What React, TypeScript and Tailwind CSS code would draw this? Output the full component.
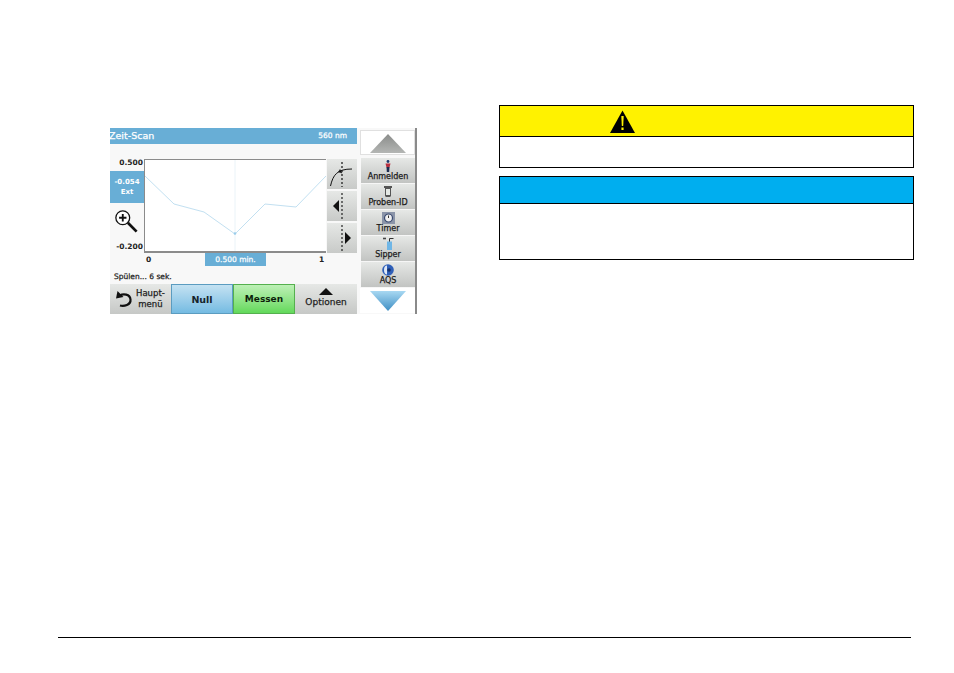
const font = "[font-family:'DejaVu_Sans',sans-serif]";

function SideButton({ label, icon }: { label: string; icon: React.ReactNode }) {
  return (
    <div className="h-[26px] w-[54px] ml-px flex flex-col items-center justify-between pb-px bg-gradient-to-b from-[#e6e8e6] to-[#c2c4c2] border-b border-[#f6f6f6] text-[8px] leading-[10px] text-[#1a1a1a] [-webkit-text-stroke:0.25px_#1a1a1a]">
      <div className="h-[14px] pt-px flex items-center justify-center">{icon}</div>
      <span>{label}</span>
    </div>
  );
}

function ToolButton({ children }: { children: React.ReactNode }) {
  return (
    <div className="h-[30px] w-[30px] flex items-center justify-center bg-gradient-to-b from-[#e6e8e6] to-[#c8cac8]">
      {children}
    </div>
  );
}

function Instrument() {
  return (
    <div className={`w-[307px] h-[186px] flex gap-[3px] bg-[#f8f8f8] ${font}`}>
      {/* Main screen */}
      <div className="w-[247px] flex flex-col">
        <div className="h-[16px] bg-[#68aed6] flex items-center justify-between pr-[10px] text-white [-webkit-text-stroke:0.25px_#fff]">
          <span className="text-[9.5px] -ml-px">Zeit-Scan</span>
          <span className="text-[7.5px]">560 nm</span>
        </div>

        <div className="flex mt-[15px] h-[94px]">
          <div className="w-[34px] flex flex-col items-end shrink-0">
            <span className="text-[7.5px] font-bold leading-[10px] -mt-[1px] pr-px text-[#222]">0.500</span>
            <div className="w-full h-[32px] mt-[3px] bg-[#68aed6] text-white text-[7px] font-bold leading-[10px] flex flex-col items-center justify-center">
              <span>-0.054</span>
              <span>Ext</span>
            </div>
            <svg viewBox="0 0 26 26" className="w-[24px] h-[24px] mt-[6px] mr-[6px]" fill="none" stroke="#111">
              <circle cx="9.5" cy="9.5" r="7.5" strokeWidth="1.4" fill="#fff" />
              <path d="M5.5 9.5h8M9.5 5.5v8" strokeWidth="2" />
              <path d="M15 15l9.5 9.5" strokeWidth="3" />
            </svg>
            <span className="text-[7.5px] font-bold leading-[10px] mt-auto mb-px pr-px text-[#222]">-0.200</span>
          </div>

          <div className="w-[182px] border-l border-t border-b-2 border-[#8b8b8b] bg-white shrink-0">
            <svg viewBox="0 0 181 91" className="w-full h-full" fill="none">
              <path d="M90 0V91" stroke="#eaf3f8" />
              <path d="M0 16L29 44L59 52L90 74L120 44L151 47L181 16" stroke="#c2e0f1" />
              <circle cx="90" cy="73.5" r="1.3" fill="#9accea" />
            </svg>
          </div>

          <div className="flex flex-col justify-between pl-px w-[31px]">
            <ToolButton>
              <svg viewBox="0 0 26 28" className="w-[26px] h-[28px]" fill="none" stroke="#111">
                <path d="M13 2V27" strokeWidth="1.2" strokeDasharray="2 2" />
                <path d="M1.5 26C4 15 8 9 23 9" strokeWidth="1" />
                <path d="M9.5 12l3.5 1-2-3.5z" fill="#111" strokeWidth="0.5" />
              </svg>
            </ToolButton>
            <ToolButton>
              <svg viewBox="0 0 26 28" className="w-[26px] h-[28px]" fill="none">
                <path d="M13 1V27" stroke="#222" strokeWidth="1.2" strokeDasharray="2 2" />
                <path d="M10 8V20L4 14z" fill="#111" />
              </svg>
            </ToolButton>
            <ToolButton>
              <svg viewBox="0 0 26 28" className="w-[26px] h-[28px]" fill="none">
                <path d="M13 1V27" stroke="#222" strokeWidth="1.2" strokeDasharray="2 2" />
                <path d="M16 8V20L22 14z" fill="#111" />
              </svg>
            </ToolButton>
          </div>
        </div>

        <div className="flex h-[13px] text-[7.5px] font-bold text-[#222] leading-[13px]">
          <span className="ml-[36px] w-[59px]">0</span>
          <div className="w-[61px] bg-[#68aed6] text-white text-center text-[7.5px] font-normal [-webkit-text-stroke:0.25px_#fff]">0.500 min.</div>
          <span className="ml-[53px]">1</span>
        </div>

        <div className="h-[18px] pl-[4px] pt-[5px] text-[7.5px] leading-[12px] text-[#222] [-webkit-text-stroke:0.25px_#222]">Spülen... 6 sek.</div>

        <div className="flex h-[30px] text-[9.5px] mt-auto">
          <div className="w-[61px] flex items-center gap-[3px] pl-[5px] bg-gradient-to-b from-[#e6e8e6] to-[#c6c8c6] text-[8.5px] leading-[11px] text-[#222]">
            <svg viewBox="0 0 18 18" className="w-[18px] h-[18px] shrink-0" fill="none" stroke="#111">
              <path d="M5 5.5C8 3.5 15 4 15.5 9.5C16 15 9 16.5 5 15.5" strokeWidth="2.2" />
              <path d="M1 8.5L2.5 1L8.5 7z" fill="#111" stroke="none" />
            </svg>
            <div className="text-center [-webkit-text-stroke:0.25px_#222]">Haupt-<br />menü</div>
          </div>
          <div className="w-[62px] pt-[2px] flex items-center justify-center bg-gradient-to-b from-[#c4e2f2] to-[#74bbe2] border border-[#5b9cc0] font-bold text-[#15232b]">Null</div>
          <div className="w-[62px] pt-[2px] flex items-center justify-center bg-gradient-to-b from-[#bdf0b6] to-[#62d95a] border border-[#55b04e] font-bold text-[#0d1f0b] text-[9px]">Messen</div>
          <div className="w-[62px] pb-[2px] flex flex-col items-center justify-center bg-gradient-to-b from-[#e6e8e6] to-[#c6c8c6] text-[9px] leading-[11px] text-[#222]">
            <svg viewBox="0 0 14 7" className="w-[14px] h-[7px] mb-[2px]"><path d="M7 0l7 7H0z" fill="#111" /></svg>
            <span className="[-webkit-text-stroke:0.25px_#222]">Optionen</span>
          </div>
        </div>
      </div>

      {/* Side menu */}
      <div className="w-[57px] border-r-2 border-[#8a8a8a] pt-[2px] flex flex-col">
        <div className="h-[25px] w-[55px] flex items-center justify-center bg-white border border-[#e0e0e0]">
          <svg viewBox="0 0 36 19" className="w-[36px] h-[19px] mt-[2px]">
            <defs>
              <linearGradient id="up" x1="0" y1="0" x2="0" y2="1">
                <stop offset="0" stopColor="#8a8c8a" />
                <stop offset="1" stopColor="#b4b6b4" />
              </linearGradient>
            </defs>
            <path d="M18 0l18 19H0z" fill="url(#up)" />
          </svg>
        </div>
        <div className="h-[3px]" />
        <SideButton
          label="Anmelden"
          icon={
            <svg viewBox="0 0 6 12" className="w-[6px] h-[12px]">
              <circle cx="3" cy="1.5" r="1.4" fill="#1c3c70" />
              <path d="M0.5 3.5h5l-1 4h-3z" fill="#b83040" />
              <path d="M1.5 7h3l-.3 5H1.8z" fill="#1c2c50" />
            </svg>
          }
        />
        <SideButton
          label="Proben-ID"
          icon={
            <svg viewBox="0 0 8 11" className="w-[8px] h-[11px]">
              <path d="M0 0h8v2H7v8l-1 1H2l-1-1V2H0z" fill="#555" />
              <path d="M2 3h4v6H2z" fill="#e4e8e4" />
            </svg>
          }
        />
        <SideButton
          label="Timer"
          icon={
            <svg viewBox="0 0 13 12" className="w-[13px] h-[12px]">
              <rect x="0" y="0" width="13" height="12" fill="#8a94a8" />
              <circle cx="6.5" cy="6" r="4" fill="#f0f0f0" stroke="#3a4a70" strokeWidth="1.2" />
              <path d="M6.5 3.5V6" stroke="#333" fill="none" />
            </svg>
          }
        />
        <SideButton
          label="Sipper"
          icon={
            <svg viewBox="0 0 13 13" className="w-[13px] h-[13px]" fill="none">
              <path d="M1 1.5h3" stroke="#444" strokeWidth="1.6" />
              <path d="M7.5 5V1.5h4" stroke="#333" strokeWidth="1" />
              <path d="M5 4.5h5V13H5z" fill="#6fb6e6" />
            </svg>
          }
        />
        <SideButton
          label="AQS"
          icon={
            <svg viewBox="0 0 12 12" className="w-[12px] h-[12px]">
              <circle cx="6" cy="6" r="5.8" fill="#2f5fb8" />
              <path d="M5 1.5a3 4.5 0 0 0 0 9z" fill="#dfe8f6" />
              <circle cx="7" cy="6" r="1.8" fill="#16306a" />
            </svg>
          }
        />
        <div className="h-[25px] w-[55px] flex items-center justify-center bg-white">
          <svg viewBox="0 0 36 20" className="w-[36px] h-[20px]">
            <defs>
              <linearGradient id="down" x1="0" y1="0" x2="0" y2="1">
                <stop offset="0" stopColor="#a8d8f2" />
                <stop offset="1" stopColor="#3f8fc4" />
              </linearGradient>
            </defs>
            <path d="M0 0h36L18 20z" fill="url(#down)" />
          </svg>
        </div>
      </div>
    </div>
  );
}

export default function App() {
  return (
    <div className="w-[954px] h-[673px] bg-white flex flex-col">
      <div className="flex h-[637px]">
        <div className="w-[499px] pl-[110px] pt-[128px]">
          <Instrument />
        </div>

        <div className="w-[415px] pt-[105px] flex flex-col">
          {/* Warning box */}
          <div className="h-[63px] border border-black flex flex-col">
            <div className="h-[30px] bg-[#fff200] border-b border-black box-content flex items-center pl-[110px]">
              <svg viewBox="0 0 25 23" className="w-[25px] h-[23px]">
                <path d="M12.5 0.5L25 23H0z" fill="#000" />
                <path d="M11.3 6h2.4l-.5 10h-1.4z" fill="#fff200" />
                <rect x="11.4" y="17.5" width="2.2" height="2.5" fill="#fff200" />
              </svg>
            </div>
          </div>

          {/* Note box */}
          <div className="h-[84px] mt-[8px] border border-black flex flex-col">
            <div className="h-[26px] bg-[#00aeef] border-b border-black box-content" />
          </div>
        </div>
      </div>

      <div className="h-px ml-[58px] w-[853px] bg-black" />
    </div>
  );
}
